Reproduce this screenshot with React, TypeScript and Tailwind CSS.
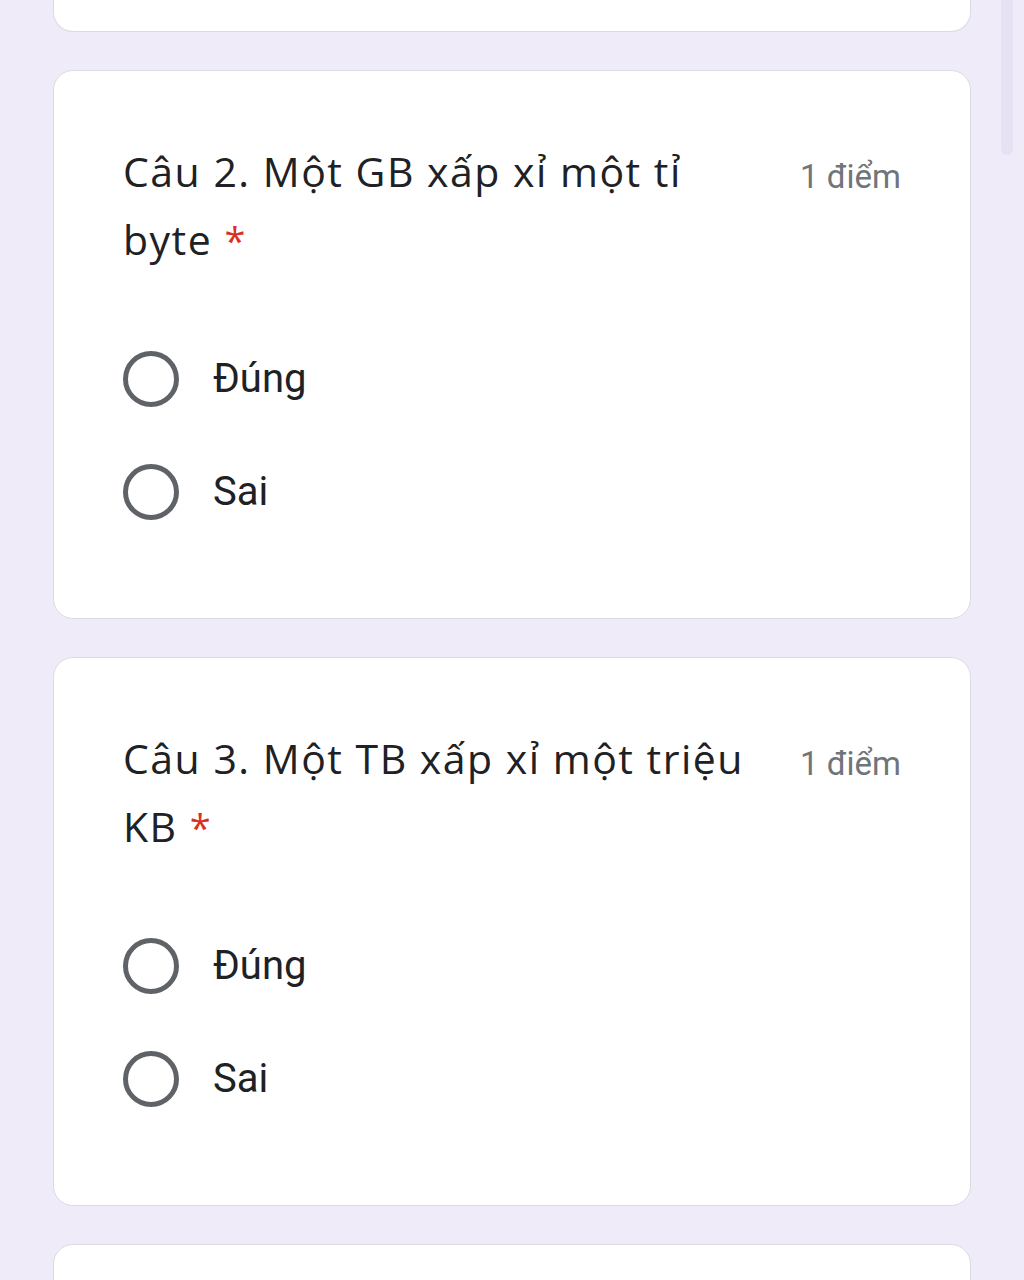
const QUESTIONS = [
  { id: 2, title: 'Câu 2. Một GB xấp xỉ một tỉ byte', points: '1 điểm', options: ['Đúng', 'Sai'] },
  { id: 3, title: 'Câu 3. Một TB xấp xỉ một triệu KB', points: '1 điểm', options: ['Đúng', 'Sai'] },
];

function Radio() {
  return <span className="block w-[56px] h-[56px] rounded-full border-[5px] border-[#5f6368] shrink-0" />;
}

function QuestionCard({ q }: { q: (typeof QUESTIONS)[number] }) {
  return (
    <div className="bg-white rounded-[20px] border-[1.5px] border-[#dadce0] pt-[66px] pb-[70px] px-[69px]">
      <div className="flex items-start justify-between">
        <h2 className="w-[640px] text-[#202124] text-[41px] leading-[68px] font-['Open_Sans',sans-serif] tracking-[1.5px]">
          {q.title}{' '}
          <span className="text-[#d93025] text-[38px] leading-[68px]">*</span>
        </h2>
        <span className="text-[#70757a] text-[33px] leading-[68px] font-['Roboto',sans-serif] shrink-0 pt-[6px]">
          {q.points}
        </span>
      </div>
      <div className="mt-[48px] flex flex-col">
        {q.options.map((o) => (
          <label key={o} className="h-[113px] flex items-center gap-[34px]">
            <Radio />
            <span className="text-[#202124] text-[40px] font-['Roboto',sans-serif]">{o}</span>
          </label>
        ))}
      </div>
    </div>
  );
}

export default function App() {
  return (
    <div className="relative h-[1280px] overflow-hidden bg-[#efebf8]">
      <div className="mx-[53px] flex flex-col gap-[38px]">
        <div className="h-[32px] bg-white border-x-[1.5px] border-b-[1.5px] border-[#dadce0] rounded-b-[20px]" />
        {QUESTIONS.map((q) => (
          <QuestionCard key={q.id} q={q} />
        ))}
        <div className="h-[400px] bg-white border-[1.5px] border-[#dadce0] rounded-[20px]" />
      </div>
      <div className="absolute right-[11px] top-0 w-[12px] h-[155px] rounded-b-full bg-[#e7e2f3]" />
    </div>
  );
}
